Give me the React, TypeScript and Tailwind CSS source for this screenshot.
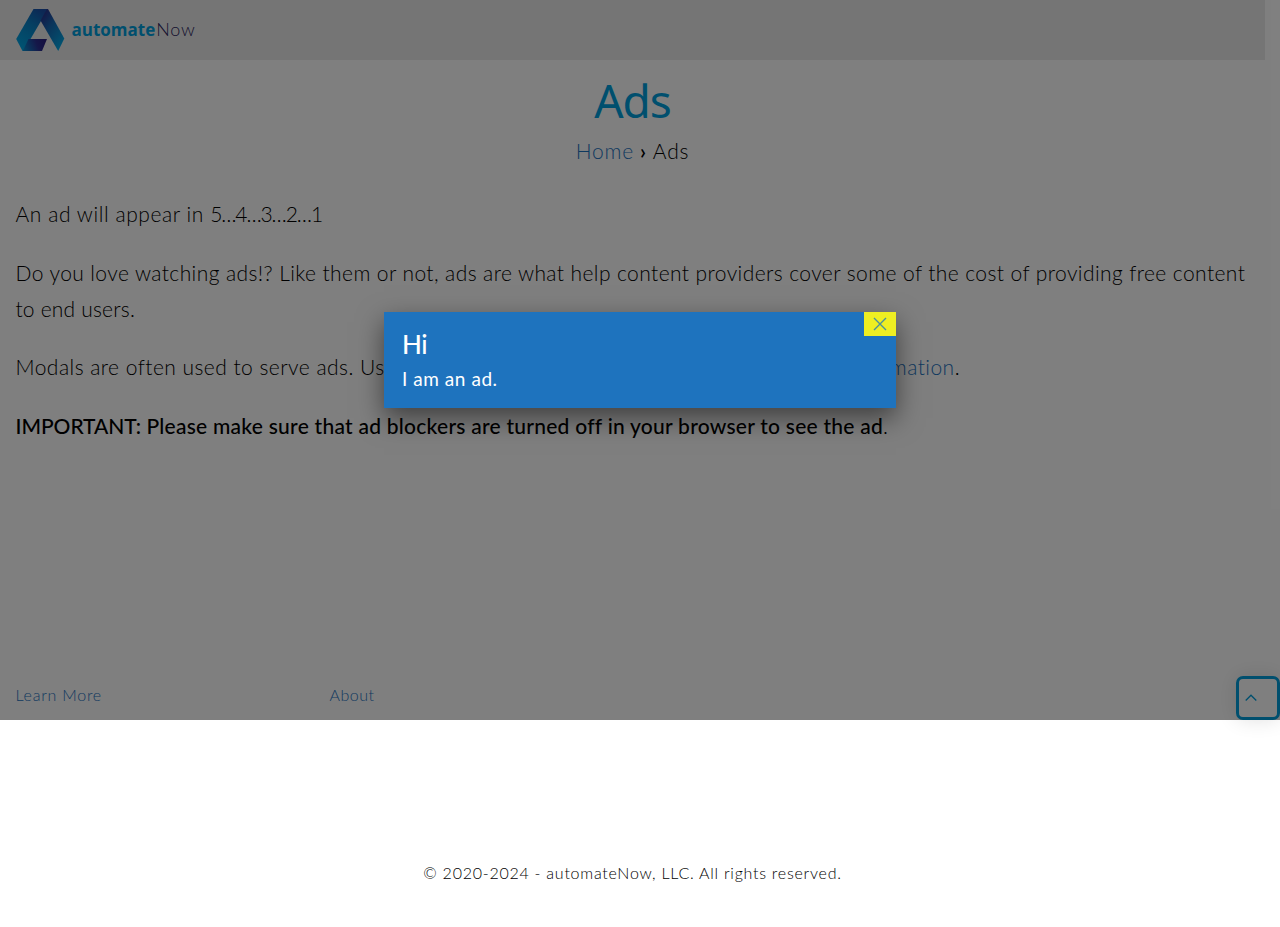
function Logo() {
  return (
    <svg width="50" height="44" viewBox="0 0 50 44" aria-hidden="true">
      <defs>
        <linearGradient id="left" x1="0.75" y1="0" x2="0.2" y2="1">
          <stop offset="0" stopColor="#1a4fa8" />
          <stop offset="0.4" stopColor="#0a80c4" />
          <stop offset="1" stopColor="#00a8e6" />
        </linearGradient>
        <linearGradient id="right" x1="0.1" y1="0" x2="0.85" y2="1">
          <stop offset="0" stopColor="#2b2585" />
          <stop offset="0.4" stopColor="#1768b4" />
          <stop offset="1" stopColor="#00aee8" />
        </linearGradient>
        <linearGradient id="foot" x1="0" y1="0.6" x2="1" y2="0.4">
          <stop offset="0" stopColor="#0a86c8" />
          <stop offset="0.6" stopColor="#2b2f92" />
          <stop offset="1" stopColor="#2b2080" />
        </linearGradient>
      </defs>
      <path d="M17.5 1H32L7.5 43H6.5L0.2 31Z" fill="url(#left)" />
      <path d="M32 1L48.3 30.5L42.2 43L24.5 12.5L31 1Z" fill="url(#right)" />
      <path d="M12.5 31H31L26 43H6.8Z" fill="url(#foot)" />
    </svg>
  );
}

const body = "text-[21px] leading-9 font-light";

export default function App() {
  return (
    <div className="relative h-[927px] w-[1280px] overflow-hidden bg-white text-black font-['Lato',sans-serif]">
      <div className="flex h-full w-[1265px] flex-col">
        <header className="flex h-[60px] shrink-0 items-center bg-[#ebebeb] pl-[15.5px]">
          <Logo />
          <div className="ml-1.5 flex items-baseline whitespace-nowrap pb-0.5 leading-6">
            <span className="font-['Open_Sans',sans-serif] text-[17px] font-bold text-[#009fdd]">automate</span>
            <span className="ml-px text-[18px] font-light tracking-[0.8px] text-[#2b2560]">Now</span>
          </div>
        </header>

        <main className="flex h-[621px] shrink-0 flex-col px-[15.5px] pt-3">
          <h1 className="text-center font-['Noto_Sans',sans-serif] text-[46px] leading-[56px] tracking-[-1px] text-[#009fdd]">Ads</h1>
          <nav className={`mt-[5px] flex justify-center gap-1.5 tracking-[0.8px] ${body}`}>
            <a className="text-[#1e73be]">Home</a>
            <span className="font-semibold">›</span>
            <span>Ads</span>
          </nav>
          <div className={`mt-[27px] flex flex-col gap-[22.5px] whitespace-nowrap ${body}`}>
            <p className="tracking-[0.57px]">
              An ad will appear in <span className="tracking-[-1.1px]">5…4…3…2…1</span>
            </p>
            <p className="tracking-[0.41px]">
              Do you love watching ads!? Like them or not, ads are what help content providers cover some of the cost of providing free content
              <br />
              <span className="tracking-[0.2px]">to end users.</span>
            </p>
            <p className="flex w-[944.5px] justify-between tracking-[0.46px]">
              <span>Modals are often used to serve ads. Use them with care.</span>
              <span>
                <a className="text-[#1e73be]">Click here for more information</a>.
              </span>
            </p>
            <p className="tracking-[0.25px]">
              <strong className="font-medium">
                <span className="tracking-[-0.05px]">IMPORTANT:</span> Please make sure that ad blockers are turned off in your browser to see the ad
              </strong>
              .
            </p>
          </div>
        </main>

        <footer className="flex flex-1 flex-col text-base leading-7 font-light">
          <div className="grid grid-cols-[314px_1fr] pl-[15.5px] text-[#1e73be]">
            <a className="tracking-[0.75px]">Learn More</a>
            <a className="tracking-[0.5px]">About</a>
          </div>
          <p className="mt-[150px] text-center tracking-[0.75px]">© 2020-2024 - automateNow, LLC. All rights reserved.</p>
        </footer>
      </div>

      <button className="absolute top-[676px] left-[1236px] flex h-11 w-11 items-center rounded-[7px] border-3 border-[#009fdd] bg-white pl-[5px] shadow-[0_0_20px_rgba(0,0,0,0.12)]" aria-label="Back to top">
        <svg width="14" height="10" viewBox="0 0 14 10" fill="none" stroke="#009fdd" strokeWidth="1.3">
          <path d="M1.7 7.5L7 2.2L12.3 7.5" />
        </svg>
      </button>

      <div className="absolute inset-x-0 top-0 flex h-[720px] items-center justify-center bg-black/50">
        <section className="relative h-24 w-[512px] bg-[#1e73be] px-[18px] pt-3.5 text-white shadow-[0_10px_25px_rgba(0,0,0,0.5)]">
          <h4 className="text-[26px] leading-9 font-medium tracking-[-0.4px]">Hi</h4>
          <p className="mt-0.5 text-[19px] leading-[30px] tracking-[0.55px]">I am an ad.</p>
          <button className="absolute top-0 right-0 flex h-6 w-8 items-center justify-center bg-[#eeee22]" aria-label="Close">
            <svg width="14" height="14" viewBox="0 0 14 14" fill="none" stroke="#4a909a" strokeWidth="1.4">
              <path d="M1 1L13 13M13 1L1 13" />
            </svg>
          </button>
        </section>
      </div>
    </div>
  );
}
